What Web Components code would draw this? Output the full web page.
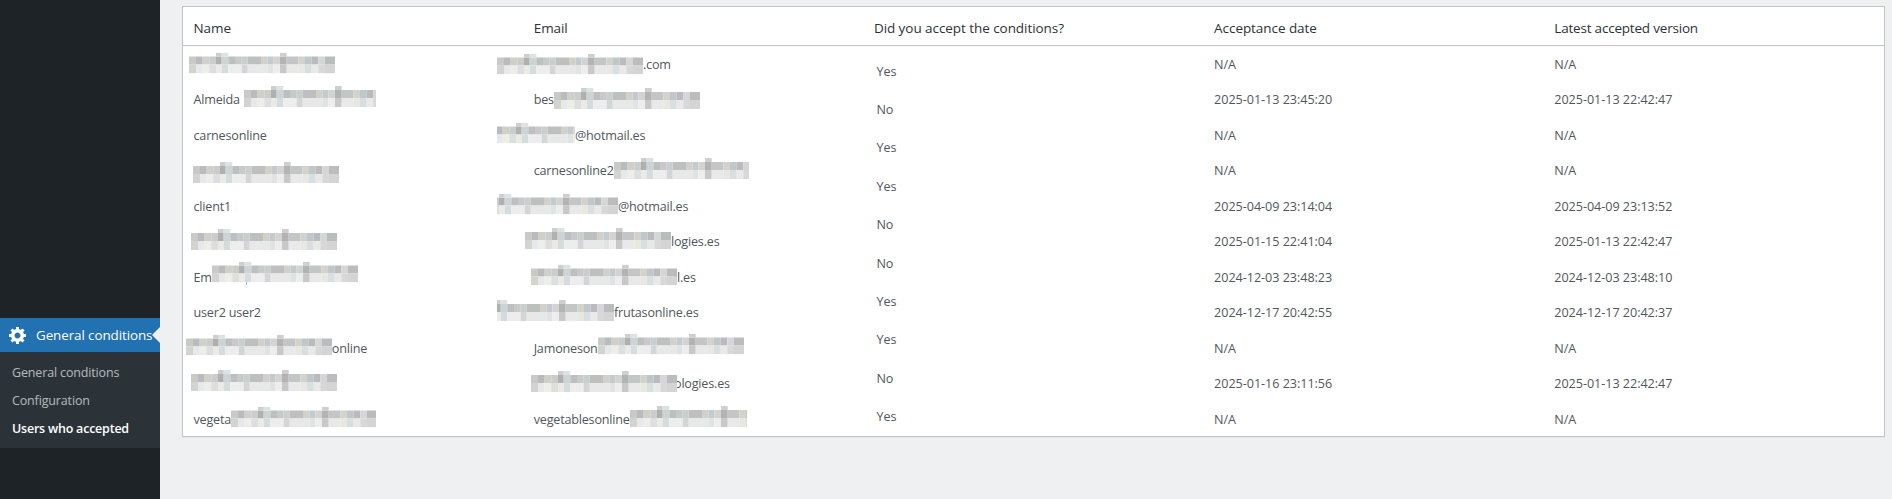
<!DOCTYPE html>
<html lang="en"><head><meta charset="utf-8"><title>Users who accepted</title>
<style>
html,body{margin:0;height:100%;overflow:hidden;background:#eff0f2}
body{font-family:"Open Sans","Noto Sans",sans-serif;font-size:13px;color:#50575e}
</style></head><body>
<gc-app>
  <gc-sidebar slot="side"></gc-sidebar>
  <gc-table slot="main">
    <gc-head>
      <gc-th>Name</gc-th><gc-th>Email</gc-th><gc-th>Did you accept the conditions?</gc-th><gc-th>Acceptance date</gc-th><gc-th ls="-.2">Latest accepted version</gc-th>
    </gc-head>
    <gc-body>
      <gc-col names>
        <gc-cell><gc-patch at="-4.7" dy="-1.5"></gc-patch></gc-cell>
        <gc-cell>Almeida<gc-patch at="4" w="132" dy="-3"></gc-patch></gc-cell>
        <gc-cell>carnesonline</gc-cell>
        <gc-cell><gc-patch at="-.7" dy="2"></gc-patch></gc-cell>
        <gc-cell>client1</gc-cell>
        <gc-cell><gc-patch at="-2.7" dy="-2"></gc-patch></gc-cell>
        <gc-cell>Em<gc-patch at="0" dy="-5.5" tick></gc-patch></gc-cell>
        <gc-cell>user2 user2</gc-cell>
        <gc-cell><gc-patch at="-7.7" dy="-3.5"></gc-patch>online</gc-cell>
        <gc-cell><gc-patch at="-2.7" dy="-3"></gc-patch></gc-cell>
        <gc-cell>vegeta<gc-patch at="0" w="145" dy="-2.5"></gc-patch></gc-cell>
      </gc-col>
      <gc-col names>
        <gc-cell><gc-patch at="-36.7" dy="-.5"></gc-patch>.com</gc-cell>
        <gc-cell>bes<gc-patch at="0" dy="-1"></gc-patch></gc-cell>
        <gc-cell><gc-patch at="-36.7" w="78" crop="8" dy="-2.5"></gc-patch>@hotmail.es</gc-cell>
        <gc-cell>carnesonline2<gc-patch at="0" w="135" dy="-2"></gc-patch></gc-cell>
        <gc-cell><gc-patch at="-36.7" w="121" crop="25" dy="-2.5"></gc-patch>@hotmail.es</gc-cell>
        <gc-cell><gc-patch at="-8.7" dy="-3"></gc-patch>logies.es</gc-cell>
        <gc-cell><gc-patch at="-2.7" dy="-2.5" over="3"></gc-patch>il.es</gc-cell>
        <gc-cell><gc-patch at="-36.7" w="117" crop="29" dy="-2"></gc-patch>frutasonline.es</gc-cell>
        <gc-cell>Jamoneson<gc-patch at="0" dy="-4.5"></gc-patch></gc-cell>
        <gc-cell><gc-patch at="-2.7" dy="-2" over="3"></gc-patch>ologies.es</gc-cell>
        <gc-cell>vegetablesonline<gc-patch at="0" w="117" dy="-3"></gc-patch></gc-cell>
      </gc-col>
      <gc-col answers>
        <gc-cell>Yes</gc-cell><gc-cell>No</gc-cell><gc-cell>Yes</gc-cell><gc-cell>Yes</gc-cell><gc-cell>No</gc-cell>
        <gc-cell>No</gc-cell><gc-cell>Yes</gc-cell><gc-cell>Yes</gc-cell><gc-cell>No</gc-cell><gc-cell>Yes</gc-cell>
      </gc-col>
      <gc-col>
        <gc-cell>N/A</gc-cell><gc-cell>2025-01-13 23:45:20</gc-cell><gc-cell>N/A</gc-cell><gc-cell>N/A</gc-cell>
        <gc-cell>2025-04-09 23:14:04</gc-cell><gc-cell>2025-01-15 22:41:04</gc-cell><gc-cell>2024-12-03 23:48:23</gc-cell>
        <gc-cell>2024-12-17 20:42:55</gc-cell><gc-cell>N/A</gc-cell><gc-cell>2025-01-16 23:11:56</gc-cell><gc-cell>N/A</gc-cell>
      </gc-col>
      <gc-col>
        <gc-cell>N/A</gc-cell><gc-cell>2025-01-13 22:42:47</gc-cell><gc-cell>N/A</gc-cell><gc-cell>N/A</gc-cell>
        <gc-cell>2025-04-09 23:13:52</gc-cell><gc-cell>2025-01-13 22:42:47</gc-cell><gc-cell>2024-12-03 23:48:10</gc-cell>
        <gc-cell>2024-12-17 20:42:37</gc-cell><gc-cell>N/A</gc-cell><gc-cell>2025-01-13 22:42:47</gc-cell><gc-cell>N/A</gc-cell>
      </gc-col>
    </gc-body>
  </gc-table>
</gc-app>
<script>
function def(name, css, html, setup){
  customElements.define(name, class extends HTMLElement{
    constructor(){
      super();
      const r=this.attachShadow({mode:'open'});
      r.innerHTML='<style>'+css+'</style>'+html;
    }
    connectedCallback(){ if(setup) setup(this); }
  });
}
def('gc-app',
 ':host{display:flex;height:499px;overflow:hidden}.side{flex:0 0 160px;display:flex}.main{flex:1;min-width:0;padding:6px 7px 0 22px}',
 '<div class="side"><slot name="side"></slot></div><div class="main"><slot name="main"></slot></div>');

def('gc-sidebar',
 `:host{display:block;width:160px;background:#1d2327;padding-top:318px;box-sizing:border-box}
  .top{position:relative;display:flex;align-items:center;height:34px;background:#2271b1;color:#fff;font-size:13.4px;letter-spacing:-.08px}
  svg{flex:0 0 20px;width:20px;height:20px;margin:0 8px;fill:#fff}
  .top::after{content:"";position:absolute;right:0;top:50%;margin-top:-8px;border:8px solid transparent;border-right-color:#eff0f2;border-left-width:0}
  ul{list-style:none;margin:0;padding:7px 0 5px;background:#2c3338}
  li{height:28px;line-height:28px;padding-left:12px;font-size:12.5px;letter-spacing:-.15px;color:rgba(240,246,252,.7)}
  li.cur{color:#fff;font-weight:600;letter-spacing:-.22px}`,
 `<div class="top"><svg viewBox="0 0 20 20"><path d="M18 12h-2.18c-.17.7-.44 1.35-.81 1.93l1.54 1.54-2.1 2.1-1.54-1.54c-.58.36-1.23.63-1.91.79V19H8v-2.18c-.68-.16-1.33-.43-1.91-.79l-1.54 1.54-2.12-2.12 1.54-1.54c-.36-.58-.63-1.23-.79-1.91H1V9.03h2.17c.16-.7.44-1.35.8-1.94L2.43 5.55l2.1-2.1 1.54 1.54c.58-.37 1.24-.64 1.93-.81V2h3v2.18c.68.16 1.33.43 1.91.79l1.54-1.54 2.12 2.12-1.54 1.54c.36.59.64 1.24.8 1.94H18V12zm-8.5 1.5c1.66 0 3-1.34 3-3s-1.34-3-3-3-3 1.34-3 3 1.34 3 3 3z"/></svg><span>General conditions</span></div>
  <ul><li>General conditions</li><li>Configuration</li><li class="cur">Users who accepted</li></ul>`);

def('gc-table',
 ':host{display:block;height:431px;box-sizing:border-box;background:#fff;border:1px solid #c3c4c7;box-shadow:0 1px 1px rgba(0,0,0,.04)}',
 '<slot></slot>');
def('gc-head',
 ':host{display:grid;grid-template-columns:repeat(5,1fr);height:39px;box-sizing:border-box;border-bottom:1px solid #c3c4c7}',
 '<slot></slot>');
def('gc-th',
 ':host{display:block;padding:9px 0 0 10.5px;line-height:24px;font-size:13.5px;color:#2c3338;letter-spacing:-.06px}',
 '<slot></slot>', el=>{ if(el.hasAttribute('ls')) el.style.letterSpacing=el.getAttribute('ls')+'px'; });
def('gc-body',
 ':host{display:grid;grid-template-columns:repeat(5,1fr);padding-top:.5px}',
 '<slot></slot>');
def('gc-col',
 `:host{display:flex;flex-direction:column;min-width:0;--row:35.5px;--ls:-.04px}
  :host([names]){--ls:-.2px}
  :host([answers]){--row:38.4px;padding-top:5.5px;--pad:13px}`,
 '<slot></slot>');
def('gc-cell',
 `:host{display:flex;align-items:center;height:var(--row);padding-left:var(--pad,10.5px);font-size:12.6px;letter-spacing:var(--ls);color:#50575e;white-space:nowrap}`,
 '<slot></slot>');

const B=[0,7,13.7,20.3,27,32.7,39.3,46,52.7,58.7,72,78.7,84.3,91,97.7,109.3,116,122.7,129.3,136,146];
const R1=['c9c9c5','b8bcbd','d0d0c8','c9cdcc','b0b0b0','ccd4d6','bcc0c0','c9c9c9','c8cfd0','bebfbf','d1d1c9','c2cbcf','d3d3d3','b3b3b3','c3c6c6','d3d3cb','c0c7cb','b9bbc0','d6d6d6','b9bdbd'];
const R2=['d3d3cf','e6e8ea','eeeee8','dcdfdf','ebebe4','d5dcdd','ededed','ededed','d2d6d6','e8e8e8','e6e9e9','dfe3e3','ededed','c8c8c8','e9e9e9','e8e8e0','d8dfe1','e9e9e9','d8d8d8','d4d4d4'];
let rects='';
B.slice(0,-1).forEach((x,i)=>{
  const w=B[i+1]-x;
  rects+=`<rect x="${x}" y="4" width="${w}" height="8" fill="#${R1[i]}"/><rect x="${x}" y="12" width="${w}" height="9" fill="#${R2[i]}"/>`;
});
rects+='<rect x="27" y="0" width="5.7" height="4" fill="#cfcfcf"/><rect x="32.7" y="0" width="6.6" height="4" fill="#dde2e3"/><rect x="91" y="0" width="6.7" height="4" fill="#cfcfcf"/>';
def('gc-patch',
 `:host{display:block;position:relative;z-index:1;flex:none;width:146px;height:21px}
  .clip{width:100%;height:100%;overflow:hidden}
  svg{display:block;width:146px;height:21px;filter:blur(.35px)}
  .tick{display:none;position:absolute;left:34px;top:21px;width:1px;height:2px;background:#8c8f94}
  :host([tick]) .tick{display:block}`,
 `<div class="clip"><svg viewBox="0 0 146 21" aria-hidden="true">${rects}</svg></div><div class="tick"></div>`,
 el=>{
   const a=n=>el.getAttribute(n);
   if(a('w')) el.style.width=a('w')+'px';
   el.style.marginLeft=(a('at')||0)+'px';
   el.style.marginRight=-(a('over')||0)+'px';
   if(a('dy')) el.style.transform=`translateY(${a('dy')}px)`;
   if(a('crop')) el.shadowRoot.querySelector('svg').style.marginLeft=-a('crop')+'px';
 });
</script>
</body></html>
